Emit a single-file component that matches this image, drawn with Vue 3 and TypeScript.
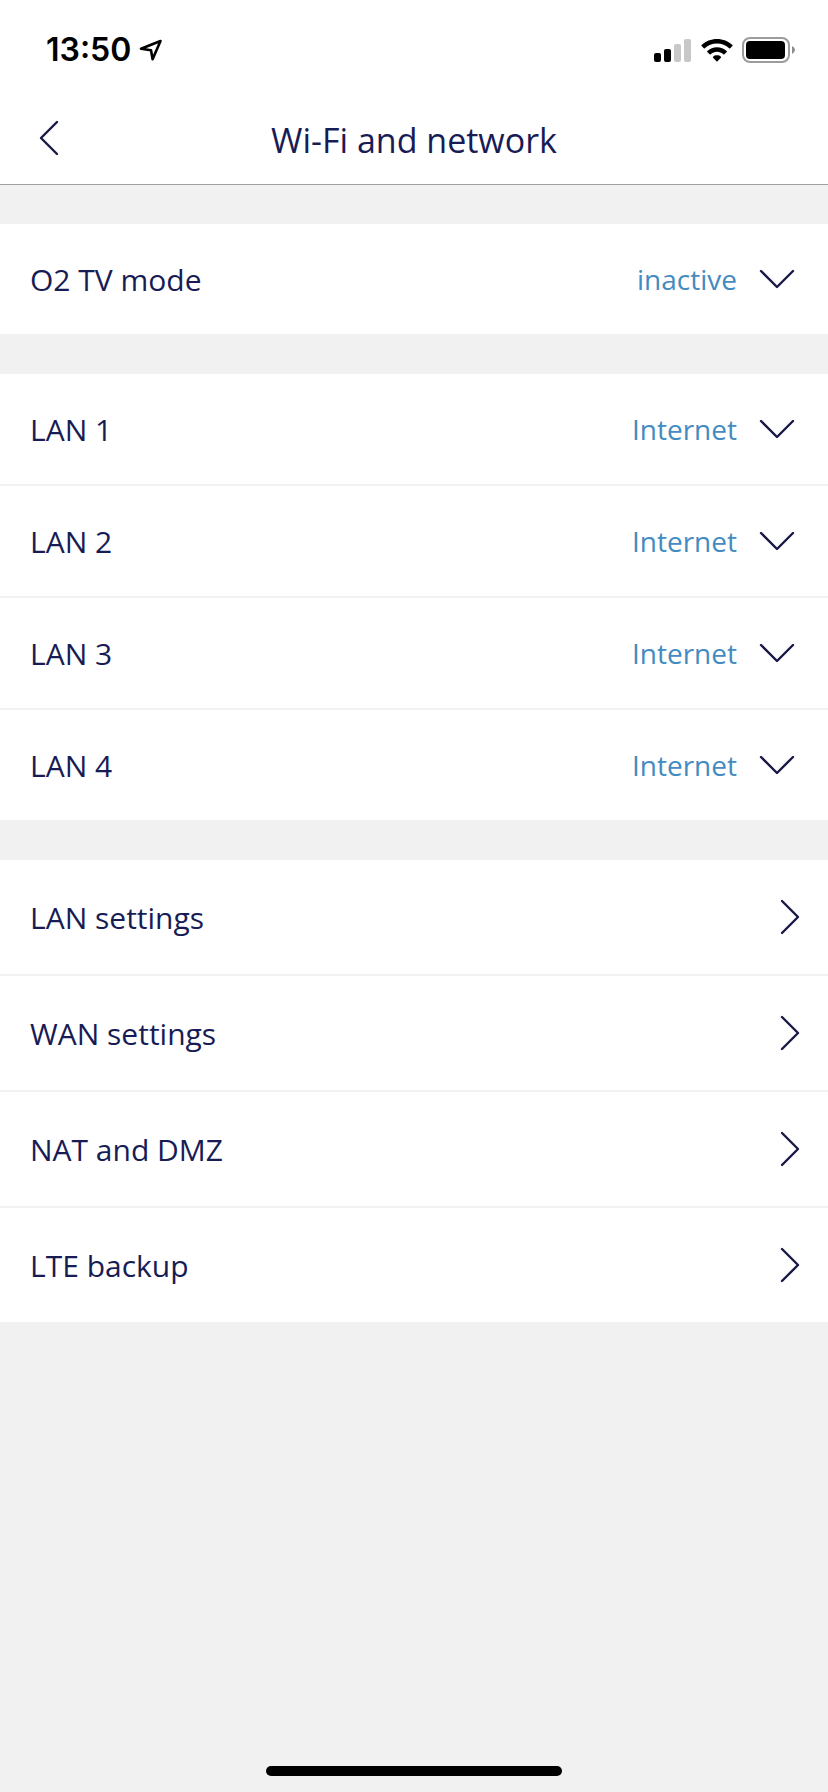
<script setup lang="ts">
import { ref } from 'vue'

interface SelectRow {
  id: string
  label: string
  value: string
  options: string[]
}

const groups = ref<SelectRow[][]>([
  [{ id: 'tv-mode', label: 'O2 TV mode', value: 'inactive', options: ['inactive', 'active'] }],
  [1, 2, 3, 4].map((port) => ({
    id: `lan-${port}`,
    label: `LAN ${port}`,
    value: 'Internet',
    options: ['Internet', 'O2 TV'],
  })),
])

const links = [
  { href: '#lan', label: 'LAN settings' },
  { href: '#wan', label: 'WAN settings' },
  { href: '#nat', label: 'NAT and DMZ' },
  { href: '#lte', label: 'LTE backup' },
]
</script>

<template>
  <div class="screen">
    <div class="status-bar">
      <div class="clock">
        <time>13:50</time>
        <svg width="24" height="24" viewBox="0 0 24 24" aria-hidden="true">
          <path d="M2 10.800 21.500 3 13.600 21.200 12 12.200Z" class="location" />
        </svg>
      </div>
      <div class="indicators">
        <svg width="38" height="24" viewBox="0 0 38 24" aria-hidden="true">
          <rect x="0" y="15" width="7" height="9" rx="2" />
          <rect x="10" y="11" width="7" height="13" rx="2" />
          <rect x="20" y="6" width="7" height="18" rx="2" class="dim" />
          <rect x="30" y="1" width="7" height="23" rx="2" class="dim" />
        </svg>
        <svg width="32" height="24" viewBox="0 0 32 24" aria-hidden="true">
          <path d="M16 1C22 1 27.400 3.300 31.400 7.100Q31.900 7.600 31.400 8.100L29.200 10.300Q28.700 10.800 28.200 10.300C25 7.300 20.700 5.500 16 5.500S7 7.300 3.800 10.300Q3.300 10.800 2.800 10.300L.6 8.100Q.1 7.600.6 7.100C4.600 3.300 10 1 16 1Z" />
          <path d="M16 9.200C19.700 9.200 23.100 10.600 25.700 12.900Q26.200 13.400 25.700 13.900L23.400 16.200Q22.900 16.600 22.400 16.200C20.700 14.600 18.500 13.700 16 13.700S11.300 14.600 9.600 16.200Q9.100 16.600 8.600 16.200L6.300 13.900Q5.800 13.400 6.300 12.900C8.900 10.600 12.300 9.200 16 9.200Z" />
          <path d="M16 17.300C17.600 17.300 18.900 17.800 19.900 18.700Q20.400 19.200 19.900 19.700L16.500 23.200Q16 23.700 15.500 23.200L12.100 19.700Q11.600 19.200 12.100 18.700C13.100 17.800 14.400 17.300 16 17.300Z" />
        </svg>
        <svg width="54" height="26" viewBox="0 0 54 26" aria-hidden="true">
          <rect x="1" y="1" width="46" height="24" rx="7" class="shell" />
          <rect x="4" y="4" width="39" height="18" rx="4" />
          <path d="M50 9Q53 10.500 53 13T50 17Z" class="nub" />
        </svg>
      </div>
    </div>

    <header class="title-bar">
      <button type="button" class="back" aria-label="Back">
        <svg width="20" height="36" viewBox="0 0 20 36" aria-hidden="true">
          <path d="M18 2 2 18 18 34" class="stroke" />
        </svg>
      </button>
      <h1>Wi-Fi and network</h1>
    </header>

    <main>
      <section v-for="(group, index) in groups" :key="index" class="group">
        <div v-for="row in group" :key="row.id" class="row">
          <label :for="row.id">{{ row.label }}</label>
          <div class="picker">
            <select :id="row.id" v-model="row.value">
              <option v-for="option in row.options" :key="option">{{ option }}</option>
            </select>
            <svg width="36" height="20" viewBox="0 0 36 20" aria-hidden="true">
              <path d="M2 2 18 18 34 2" class="stroke" />
            </svg>
          </div>
        </div>
      </section>

      <nav class="group" aria-label="Network settings">
        <a v-for="link in links" :key="link.href" :href="link.href" class="row link">
          <span>{{ link.label }}</span>
          <svg width="20" height="36" viewBox="0 0 20 36" aria-hidden="true">
            <path d="M2 2 18 18 2 34" class="stroke" />
          </svg>
        </a>
      </nav>
    </main>

    <div class="home-indicator"></div>
  </div>
</template>

<style>
body {
  background: #f1f1f1;
}
</style>

<style scoped>
.screen {
  display: flex;
  flex-direction: column;
  box-sizing: border-box;
  min-height: 100vh;
  padding-bottom: 16px;
  background: #f1f1f1;
  color: #181c55;
  font-family: "Open Sans", "Noto Sans", sans-serif;
  font-size: 30px;
  line-height: 40px;
}

svg {
  display: block;
  flex: none;
}

.status-bar {
  display: flex;
  align-items: center;
  justify-content: space-between;
  height: 96px;
  padding: 4px 32px 0 46px;
  box-sizing: border-box;
  background: #fff;
  color: #000;
}

.clock,
.indicators {
  display: flex;
  align-items: center;
  gap: 9px;
}

.clock {
  gap: 8px;
  font-family: Inter, "Liberation Sans", sans-serif;
  font-size: 32px;
  font-weight: 600;
}

.location {
  fill: none;
  stroke: #000;
  stroke-width: 2.600;
  stroke-linejoin: round;
}

.dim {
  fill: #c8c8c8;
}

.shell {
  fill: none;
  stroke: #9c9c9c;
  stroke-width: 2;
}

.nub {
  fill: #8c8c8c;
}

.stroke {
  fill: none;
  stroke: #181845;
  stroke-width: 2.400;
  stroke-linecap: round;
  stroke-linejoin: round;
}

.title-bar {
  display: grid;
  grid-template-columns: 80px 1fr 80px;
  align-items: center;
  height: 88px;
  border-bottom: 1px solid #a0a0a0;
  background: #fff;
}

.back {
  padding: 0 0 4px 39px;
  border: 0;
  background: none;
}

h1 {
  margin: 0;
  font-size: 34px;
  font-weight: 400;
  text-align: center;
}

main {
  padding-top: 39px;
}

.group {
  margin-bottom: 40px;
  background: #fff;
}

.row {
  display: flex;
  align-items: center;
  justify-content: space-between;
  height: 110px;
  padding: 0 33px 0 30px;
}

.row + .row {
  border-top: 2px solid #f1f1f1;
}

.row label,
.link span {
  padding-top: 2px;
}

.picker {
  display: grid;
  align-items: center;
}

.picker > * {
  grid-area: 1 / 1;
}

.picker svg {
  justify-self: end;
  pointer-events: none;
}

select {
  appearance: none;
  padding: 0 58px 0 0;
  border: 0;
  background: none;
  color: #438bc0;
  font: inherit;
  font-size: 28px;
  text-align-last: right;
}

.link {
  height: 114px;
  padding-right: 28px;
}

.link {
  color: inherit;
  text-decoration: none;
}

.home-indicator {
  width: 296px;
  height: 10px;
  margin: auto auto 0;
  border-radius: 5px;
  background: #000;
}
</style>
